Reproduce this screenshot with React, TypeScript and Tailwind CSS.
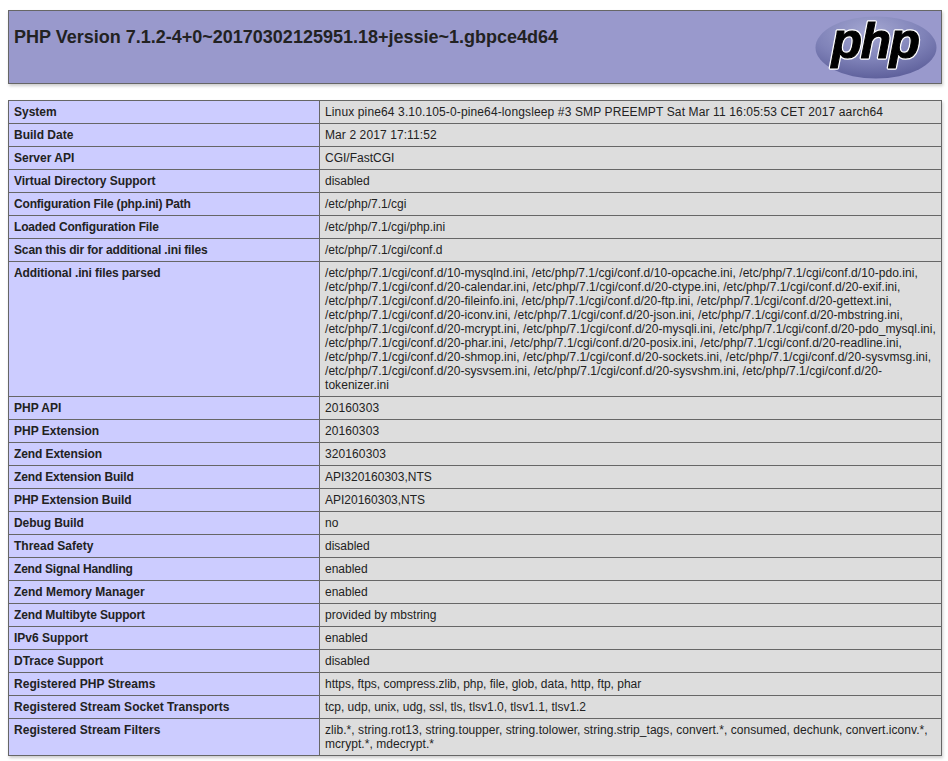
// [key, value, key tracking, value tracking] - tracking evens out the hinted Arial widths of the original
const rows: [string, string, string?, string?][] = [
  ["System", "Linux pine64 3.10.105-0-pine64-longsleep #3 SMP PREEMPT Sat Mar 11 16:05:53 CET 2017 aarch64", "", "tracking-[0.13px]"],
  ["Build Date", "Mar 2 2017 17:11:52", "", "tracking-[0.1px]"],
  ["Server API", "CGI/FastCGI"],
  ["Virtual Directory Support", "disabled", "tracking-[-0.04px]"],
  ["Configuration File (php.ini) Path", "/etc/php/7.1/cgi", "tracking-[-0.18px]"],
  ["Loaded Configuration File", "/etc/php/7.1/cgi/php.ini", "tracking-[-0.16px]"],
  ["Scan this dir for additional .ini files", "/etc/php/7.1/cgi/conf.d", "tracking-[-0.15px]"],
  [
    "Additional .ini files parsed",
    "/etc/php/7.1/cgi/conf.d/10-mysqlnd.ini, /etc/php/7.1/cgi/conf.d/10-opcache.ini, /etc/php/7.1/cgi/conf.d/10-pdo.ini, /etc/php/7.1/cgi/conf.d/20-calendar.ini, /etc/php/7.1/cgi/conf.d/20-ctype.ini, /etc/php/7.1/cgi/conf.d/20-exif.ini, /etc/php/7.1/cgi/conf.d/20-fileinfo.ini, /etc/php/7.1/cgi/conf.d/20-ftp.ini, /etc/php/7.1/cgi/conf.d/20-gettext.ini, /etc/php/7.1/cgi/conf.d/20-iconv.ini, /etc/php/7.1/cgi/conf.d/20-json.ini, /etc/php/7.1/cgi/conf.d/20-mbstring.ini, /etc/php/7.1/cgi/conf.d/20-mcrypt.ini, /etc/php/7.1/cgi/conf.d/20-mysqli.ini, /etc/php/7.1/cgi/conf.d/20-pdo_mysql.ini, /etc/php/7.1/cgi/conf.d/20-phar.ini, /etc/php/7.1/cgi/conf.d/20-posix.ini, /etc/php/7.1/cgi/conf.d/20-readline.ini, /etc/php/7.1/cgi/conf.d/20-shmop.ini, /etc/php/7.1/cgi/conf.d/20-sockets.ini, /etc/php/7.1/cgi/conf.d/20-sysvmsg.ini, /etc/php/7.1/cgi/conf.d/20-sysvsem.ini, /etc/php/7.1/cgi/conf.d/20-sysvshm.ini, /etc/php/7.1/cgi/conf.d/20-tokenizer.ini",
    "tracking-[-0.1px]",
    "tracking-[0.05px]",
  ],
  ["PHP API", "20160303", "", "tracking-[0.1px]"],
  ["PHP Extension", "20160303", "", "tracking-[0.1px]"],
  ["Zend Extension", "320160303", "tracking-[-0.1px]", "tracking-[0.1px]"],
  ["Zend Extension Build", "API320160303,NTS", "tracking-[-0.15px]"],
  ["PHP Extension Build", "API20160303,NTS", "tracking-[-0.05px]"],
  ["Debug Build", "no", "tracking-[-0.08px]"],
  ["Thread Safety", "disabled"],
  ["Zend Signal Handling", "enabled", "tracking-[-0.2px]"],
  ["Zend Memory Manager", "enabled"],
  ["Zend Multibyte Support", "provided by mbstring", "tracking-[-0.14px]"],
  ["IPv6 Support", "enabled"],
  ["DTrace Support", "disabled"],
  ["Registered PHP Streams", "https, ftps, compress.zlib, php, file, glob, data, http, ftp, phar", "tracking-[0.04px]", "tracking-[-0.02px]"],
  ["Registered Stream Socket Transports", "tcp, udp, unix, udg, ssl, tls, tlsv1.0, tlsv1.1, tlsv1.2", "tracking-[0.04px]", "tracking-[-0.02px]"],
  [
    "Registered Stream Filters",
    "zlib.*, string.rot13, string.toupper, string.tolower, string.strip_tags, convert.*, consumed, dechunk, convert.iconv.*, mcrypt.*, mdecrypt.*",
    "tracking-[0.04px]",
    "tracking-[0.05px]",
  ],
]

function PhpLogo() {
  return (
    <svg width="122" height="68" viewBox="0 0 122 68" className="block">
      <defs>
        <radialGradient id="oval" cx="45%" cy="25%" r="75%">
          <stop offset="0%" stopColor="#a5a8d2" />
          <stop offset="60%" stopColor="#7f82b8" />
          <stop offset="100%" stopColor="#5f619c" />
        </radialGradient>
      </defs>
      <ellipse cx="61" cy="34.5" rx="60.5" ry="31" fill="url(#oval)" />
      <text
        x="60"
        y="45"
        textAnchor="middle"
        fontFamily="'Liberation Sans', Arial, sans-serif"
        fontWeight="bold"
        fontStyle="italic"
        fontSize="50"
        letterSpacing="-1.5"
        fill="#000"
        stroke="#fff"
        strokeWidth="3.5"
        strokeLinejoin="round"
      >
        php
      </text>
      <text
        x="60"
        y="45"
        textAnchor="middle"
        fontFamily="'Liberation Sans', Arial, sans-serif"
        fontWeight="bold"
        fontStyle="italic"
        fontSize="50"
        letterSpacing="-1.5"
        fill="#000"
        stroke="#000"
        strokeWidth="1"
        aria-hidden="true"
      >
        php
      </text>
    </svg>
  )
}

export default function App() {
  return (
    <div className="min-h-[761px] bg-white pt-2.5 pl-2 pr-1.5 text-[#222] font-['Liberation_Sans',Arial,sans-serif]">
      <div className="flex h-[74px] justify-between border border-[#666] bg-[#99c] pl-[5px] pr-[4px] shadow-[1px_2px_3px_#ccc]">
        <h1 className="pt-[14px] text-[18px] leading-[24px] font-bold">
          PHP Version 7.1.2-4+0~20170302125951.18+jessie~1.gbpce4d64
        </h1>
        <div className="pt-[2px]">
          <PhpLogo />
        </div>
      </div>

      <table className="mt-4 w-full table-fixed border-collapse shadow-[1px_2px_3px_#ccc]">
        <tbody>
          {rows.map(([key, value, keyTracking, valueTracking]) => (
            <tr key={key}>
              <td className={`w-[311px] border border-[#666] bg-[#ccf] px-[5px] py-[4px] align-baseline text-[12px] leading-[14px] font-bold ${keyTracking ?? ""}`}>
                {key}
              </td>
              <td className={`border border-[#666] bg-[#ddd] px-[5px] py-[4px] align-baseline text-[12px] leading-[14px] ${valueTracking ?? ""}`}>
                {value}
              </td>
            </tr>
          ))}
        </tbody>
      </table>
    </div>
  )
}
